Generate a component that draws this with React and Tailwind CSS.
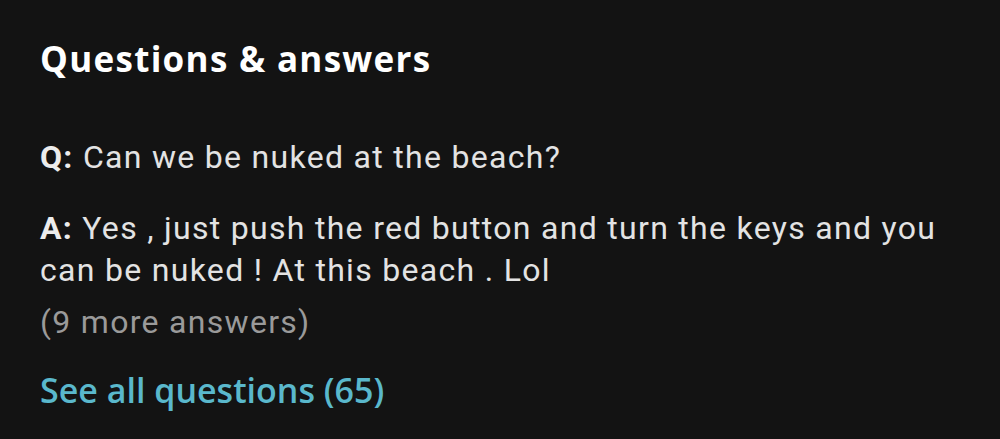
export default function App() {
  return (
    <div className="w-[1000px] h-[439px] bg-[#131313] px-10 pt-[34px] overflow-hidden" style={{ fontFamily: 'Roboto, sans-serif' }}>
      <h2 className="text-[35px] leading-[50px] font-bold text-white tracking-[1.3px]" style={{ fontFamily: '"Open Sans", sans-serif' }}>
        Questions &amp; answers
      </h2>

      <p className="mt-[52px] text-[32px] leading-[42px] tracking-[1.3px] text-[#e3e3e3]">
        <span className="font-bold text-[#ececec]">Q:</span> Can we be nuked at the beach?
      </p>

      <p className="mt-[29px] text-[32px] leading-[42px] tracking-[1.3px] text-[#e3e3e3]">
        <span className="font-bold text-[#ececec]">A:</span> Yes , just push the red button and turn the keys and you can be nuked ! At this beach . Lol
      </p>
      <p className="mt-[10px] text-[32px] leading-[42px] tracking-[1.3px] text-[#9a9a9a]">(9 more answers)</p>

      <p className="mt-[26px] text-[34px] leading-[42px] font-semibold text-[#5ab8cc]" style={{ fontFamily: '"Open Sans", sans-serif' }}>
        See all questions (65)
      </p>
    </div>
  );
}
